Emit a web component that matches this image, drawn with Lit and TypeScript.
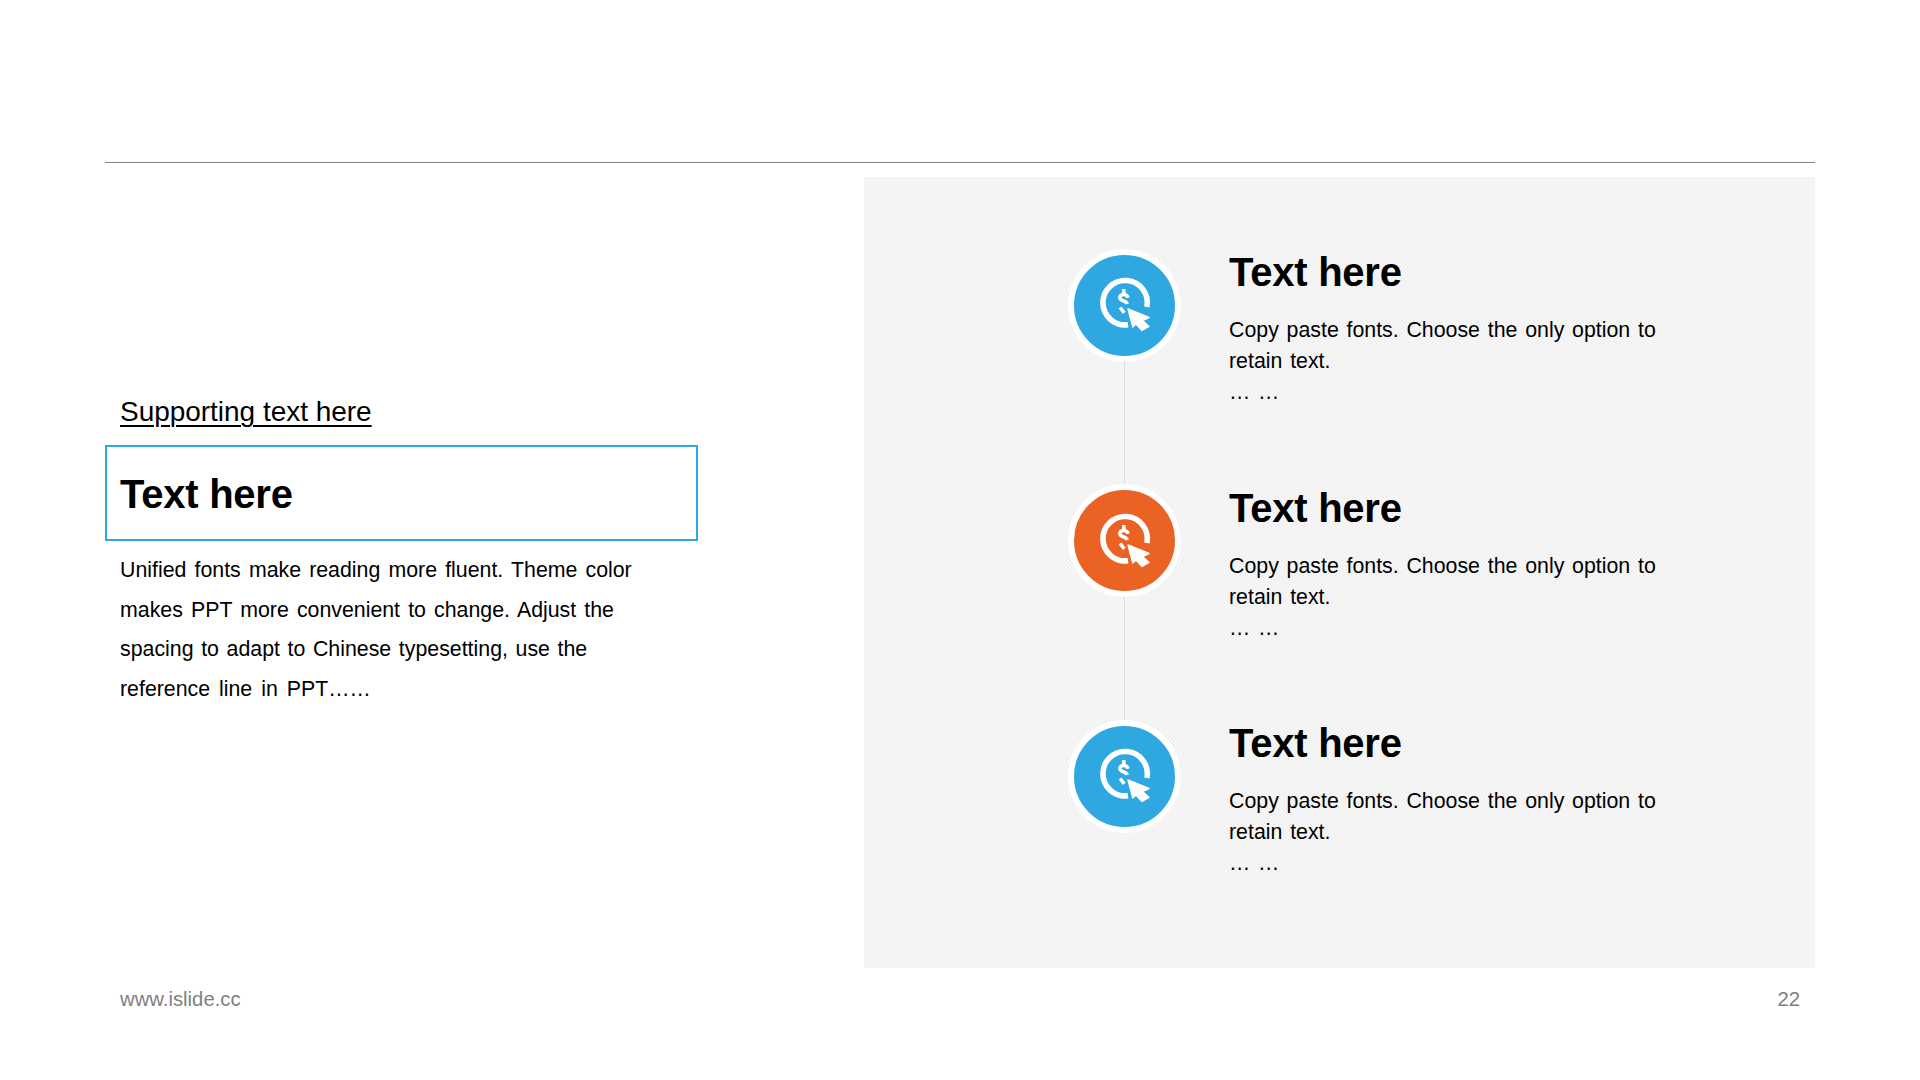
import { LitElement, html, css, svg } from "lit";
import { customElement } from "lit/decorators.js";

const icon = svg`<svg class="ico" viewBox="-0.5 5.5 70 70" width="70" height="70">
  <path d="M57.4 42.5 A22.2 22.2 0 1 0 38.5 60.2" fill="none" stroke="#fff" stroke-width="5.6"/>
  <path d="M34.3 24.5v4.5M38.6 33.2C37.4 29.2 30.4 28.9 30.3 33 30.2 36.8 36.8 36 37.8 39.4M30.6 43 34.8 48.4" fill="none" stroke="#fff" stroke-width="3.5"/>
  <path d="M38.5 44.5 59.5 53 53 56 59.5 62 52.5 66 46.5 59.5 43.3 62.5Z" fill="#fff" stroke="#fff" stroke-width="1.4" stroke-linejoin="round"/>
</svg>`;

const items = ["#2fa8e1", "#ea6324", "#2fa8e1"];

@customElement("app-root")
export class AppRoot extends LitElement {
  static styles = css`
    :host { display: block; width: 1920px; height: 1080px; background: #fff; font-family: "Liberation Sans", Arial, sans-serif; color: #000; overflow: hidden; }
    .slide { display: flex; flex-direction: column; height: 1080px; padding: 162px 105px 0; box-sizing: border-box; }
    .rule { height: 1px; background: #7f7f7f; flex: none; }
    .main { display: flex; justify-content: space-between; margin-top: 14px; height: 791px; flex: none; }
    .left { width: 593px; padding-top: 217px; box-sizing: border-box; }
    .support { font-size: 28px; line-height: 36px; padding-left: 15px; text-decoration: underline; text-underline-offset: 4px; text-decoration-thickness: 2px; letter-spacing: -0.03px; }
    .box { border: 2px solid #2fa8e1; height: 96px; box-sizing: border-box; margin-top: 15px; padding: 2px 0 0 13px; display: flex; align-items: center; font-size: 40px; font-weight: 700; letter-spacing: -0.25px; }
    .desc { margin: 10px 0 0; padding-left: 15px; font-size: 21.33px; line-height: 39.7px; white-space: nowrap; word-spacing: 2.2px; }
    .desc div:nth-child(3) { word-spacing: 1.7px; }
    .desc div:nth-child(4) { word-spacing: 3px; }
    .panel { width: 951px; background-color: #f0f0f0; background-image: radial-gradient(circle, #f8f8f8 0.9px, transparent 1.2px), radial-gradient(circle, #f8f8f8 0.9px, transparent 1.2px); background-size: 4px 4px; background-position: 0 0, 2px 2px; padding: 72px 0 0 204px; box-sizing: border-box; }
    .row { display: flex; height: 235.5px; gap: 49px; }
    .node { position: relative; flex: none; width: 112px; }
    .row:not(:last-child) .node::after { content: ""; position: absolute; left: 55.5px; top: 112px; width: 1.5px; height: 124px; background: #dcdcdc; }
    .circle { width: 113px; height: 113px; margin: -0.5px; border-radius: 50%; border: 6px solid #fff; box-sizing: border-box; display: flex; align-items: center; justify-content: center; }
    .ico { flex: none; display: block; }
    h3 { margin: 0; font-size: 40px; line-height: 46px; font-weight: 700; letter-spacing: -0.25px; }
    p { margin: 20px 0 0; font-size: 21.33px; line-height: 31px; white-space: nowrap; word-spacing: 1.85px; }
    .foot { display: flex; justify-content: space-between; padding: 19px 15px 0; font-size: 20.3px; line-height: 24px; color: #7f7f7f; }
  `;
  render() {
    return html`<div class="slide">
      <div class="rule"></div>
      <div class="main">
        <div class="left">
          <div class="support">Supporting text here</div>
          <div class="box">Text here</div>
          <div class="desc"><div>Unified fonts make reading more fluent. Theme color</div><div>makes PPT more convenient to change. Adjust the</div><div>spacing to adapt to Chinese typesetting, use the</div><div>reference line in PPT……</div></div>
        </div>
        <div class="panel">
          ${items.map(c => html`<div class="row">
            <div class="node"><div class="circle" style="background:${c}">${icon}</div></div>
            <div class="txt"><h3>Text here</h3><p>Copy paste fonts. Choose the only option to<br>retain text.<br>… …</p></div>
          </div>`)}
        </div>
      </div>
      <div class="foot"><span>www.islide.cc</span><span>22</span></div>
    </div>`;
  }
}
